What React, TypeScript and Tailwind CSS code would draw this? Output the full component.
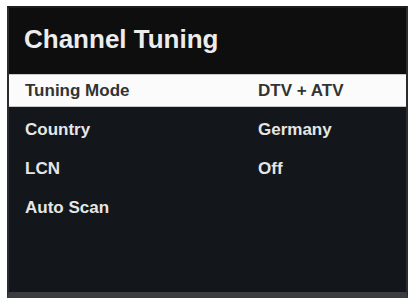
export default function App() {
  const rows = [
    { label: "Tuning Mode", value: "DTV + ATV", active: true },
    { label: "Country", value: "Germany" },
    { label: "LCN", value: "Off" },
    { label: "Auto Scan", value: "" },
  ];

  return (
    <div className="h-[298px] w-[410px] bg-white pl-[7px] pt-[6px]" style={{ fontFamily: '"Liberation Sans", Arial, sans-serif' }}>
      <div className="flex h-[292px] w-[401px] flex-col border-x-2 border-t-2 border-b-[6px] border-x-[#2a2c2f] border-t-[#1c1d1f] border-b-[#3a3c3f] bg-[#13161a]">
        <div className="h-[66px] bg-[#0e0e0f] pl-[15px] pt-[16px]">
          <h1 className="text-[26px] leading-[30px] font-bold text-[#ececec]">Channel Tuning</h1>
        </div>
        <div className="flex flex-col gap-[6px]">
          {rows.map((row) => (
            <div
              key={row.label}
              className={
                row.active
                  ? "grid h-[33px] grid-cols-[233px_1fr] items-center border-y border-[#c8c8c8] bg-[#fbfbfb] pl-[16px] text-[17px] leading-[20px] font-bold text-[#333333]"
                  : "grid h-[33px] grid-cols-[233px_1fr] items-center pl-[16px] text-[17px] leading-[20px] font-bold text-[#e6e6e6]"
              }
            >
              <span>{row.label}</span>
              <span>{row.value}</span>
            </div>
          ))}
        </div>
      </div>
    </div>
  );
}
